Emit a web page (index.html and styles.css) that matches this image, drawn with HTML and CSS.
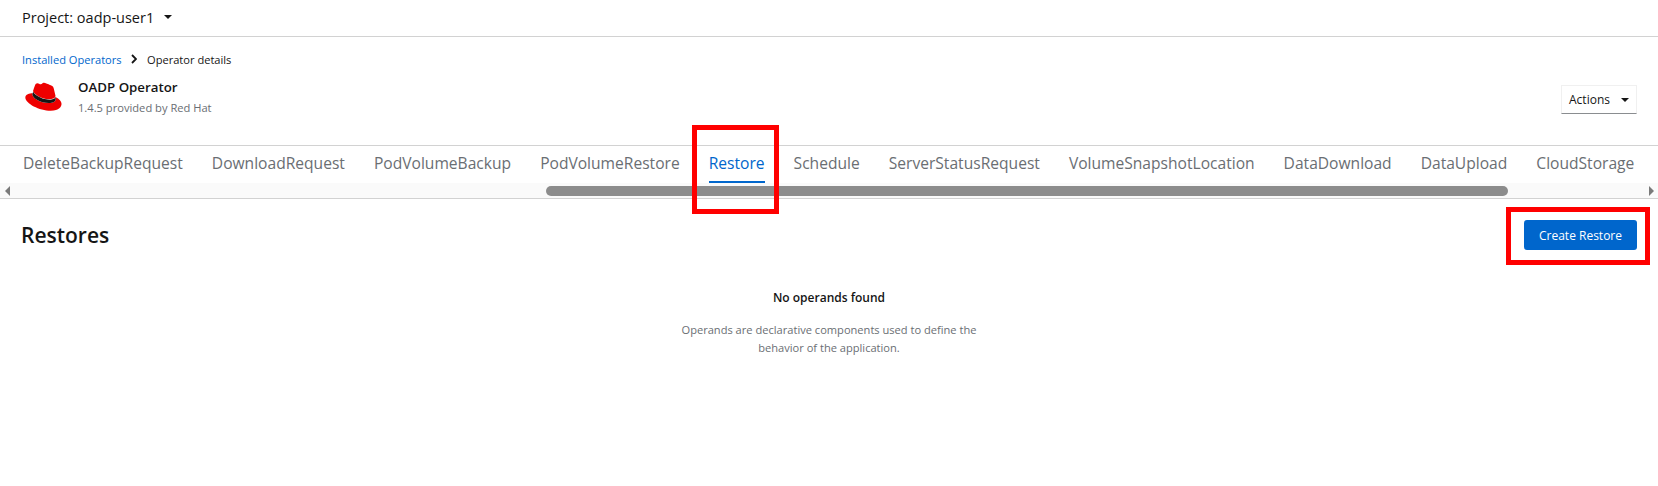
FILE: index.html
```html
<!DOCTYPE html>
<html lang="en">
<head>
<meta charset="utf-8">
<title>OADP Operator</title>
<link rel="stylesheet" href="styles.css">
</head>
<body>
<header class="project-bar">
  <span class="project-name">Project: oadp-user1</span>
  <span class="caret caret-project"></span>
</header>
<section class="details">
  <nav class="breadcrumb">
    <a class="crumb-link">Installed Operators</a>
    <svg class="crumb-sep" viewBox="0 0 6 10" width="6" height="10"><path d="M1 1l4 4-4 4" fill="none" stroke="#151515" stroke-width="1.800"/></svg>
    <span class="crumb-current">Operator details</span>
  </nav>
  <div class="title-row">
    <svg class="logo" viewBox="0 0 40 32" width="38" height="31">
      <path fill="#e00" d="M26.700 17.800c2.600 0 6.400-.5 6.400-3.600 0-.2 0-.5-.1-.7l-1.600-6.800C31 5.200 30.700 4.500 28.200 3.200 26.200 2.200 21.900.5 20.600.5c-1.200 0-1.500 1.500-2.900 1.500-1.300 0-2.300-1.100-3.600-1.100-1.200 0-2 .8-2.600 2.500 0 0-1.700 4.800-1.900 5.500v.4c0 1.900 7.500 8.500 17.100 8.500z"/>
      <path fill="#e00" d="M33.100 15.500c.3 1.600.3 1.800.3 2 0 2.800-3.100 4.300-7.200 4.300-9.300 0-17.400-5.400-17.400-9 0-.5.1-1 .3-1.400C5.800 11.600 1.400 12.200 1.400 16c0 6.300 14.900 14 26.700 14 9.100 0 11.400-4.100 11.400-7.300 0-2.500-2.200-5.400-6.400-7.200z"/>
      <path fill="#151515" d="M33.100 15.500c.3 1.600.3 1.800.3 2 0 2.800-3.100 4.300-7.200 4.300-9.300 0-17.400-5.400-17.400-9 0-.5.1-1 .3-1.400l.7-1.800v.4c0 1.900 7.500 8.300 17 8.300 2.600 0 6.300-.5 6.300-3.600 0-.2 0-.5-.1-.7z"/>
    </svg>
    <div class="title-text">
      <h1 class="op-name">OADP Operator</h1>
      <p class="op-sub">1.4.5 provided by Red Hat</p>
    </div>
    <button class="actions">Actions<span class="caret caret-actions"></span></button>
  </div>
</section>
<div class="tabs-wrap">
  <ul class="tabs">
    <li class="tab">DeleteBackupRequest</li>
    <li class="tab">DownloadRequest</li>
    <li class="tab">PodVolumeBackup</li>
    <li class="tab">PodVolumeRestore</li>
    <li class="tab tab-active">Restore</li>
    <li class="tab">Schedule</li>
    <li class="tab">ServerStatusRequest</li>
    <li class="tab">VolumeSnapshotLocation</li>
    <li class="tab">DataDownload</li>
    <li class="tab">DataUpload</li>
    <li class="tab">CloudStorage</li>
  </ul>
  <div class="scrollbar">
    <span class="arrow arrow-left"></span>
    <span class="thumb"></span>
    <span class="arrow arrow-right"></span>
  </div>
</div>
<main class="content">
  <div class="content-head">
    <h2 class="content-title">Restores</h2>
    <button class="primary">Create Restore</button>
  </div>
  <div class="empty">
    <h3 class="empty-title">No operands found</h3>
    <p class="empty-text">Operands are declarative components used to define the<br>behavior of the application.</p>
  </div>
</main>
<div class="mark mark-tab"></div>
<div class="mark mark-button"></div>
</body>
</html>
```

FILE: styles.css
```css
* { box-sizing: border-box; }
html, body { margin: 0; padding: 0; }
body {
  width: 1658px;
  height: 486px;
  overflow: hidden;
  position: relative;
  background: #fff;
  color: #151515;
  font-family: "Open Sans", "Liberation Sans", sans-serif;
}
.project-bar {
  height: 37px;
  border-bottom: 1px solid #d2d2d2;
  padding: 0 22px 2px;
  display: flex;
  align-items: center;
  font-size: 14.500px;
}
.project-name { width: 142px; white-space: nowrap; }
.caret {
  display: inline-block;
  width: 0;
  height: 0;
  border-left: 5px solid transparent;
  border-right: 5px solid transparent;
  border-top: 5px solid #151515;
}
.caret-project { border-width: 4.500px 4.500px 0; }
.details { height: 108px; padding: 13px 22px 0; }
.breadcrumb { display: flex; align-items: center; font-size: 11.100px; height: 18px; white-space: nowrap; }
.crumb-link { color: #06c; width: 100px; }
.crumb-sep { margin: 0 10px 0 9px; flex: none; }
.title-row { display: flex; align-items: flex-start; margin-top: 9px; }
.logo { margin: 5px 16px 0 2px; flex: none; }
.title-text { flex: 1; }
.op-name { margin: 0; font-size: 13.300px; line-height: 20px; font-weight: 600; }
.op-sub { margin: 1px 0 0; font-size: 11.150px; line-height: 20px; color: #6a6e73; }
.actions {
  width: 76px;
  height: 29px;
  margin: 8px -1px 0 0;
  padding: 0;
  background: #fff;
  border: 1px solid #f0f0f0;
  border-bottom-color: #8a8d90;
  font: inherit;
  font-size: 12px;
  color: #151515;
  display: flex;
  align-items: center;
  justify-content: center;
  gap: 11px;
}
.caret-actions { border-width: 4px 4px 0; }
.tabs-wrap {
  height: 54px;
  border-top: 1px solid #d2d2d2;
  border-bottom: 1px solid #d2d2d2;
  display: flex;
  flex-direction: column;
}
.tabs {
  list-style: none;
  margin: 0;
  padding: 0 0 0 23px;
  display: flex;
  gap: 29px;
  height: 37px;
  font-size: 15.600px;
  color: #6a6e73;
}
.tab { height: 37px; line-height: 18px; padding-top: 8px; white-space: nowrap; }
.tab-active { color: #06c; border-bottom: 2px solid #06c; }
.scrollbar {
  flex: 1;
  background: #fafafa;
  display: flex;
  align-items: center;
  padding-left: 5px;
}
.arrow {
  width: 0;
  height: 0;
  border-top: 5px solid transparent;
  border-bottom: 5px solid transparent;
}
.arrow-left { border-right: 5px solid #7a7a7a; margin-right: 536px; }
.arrow-right { border-left: 5px solid #7a7a7a; margin-left: 141px; }
.thumb { width: 962px; height: 10px; border-radius: 5px; background: #8c8c8c; }
.content { padding: 0 21px; }
.content-head {
  display: flex;
  justify-content: space-between;
  align-items: center;
  padding-top: 21px;
  height: 51px;
}
.content-title { margin: 0 0 1px; font-size: 21px; font-weight: 600; color: #151515; }
.primary {
  width: 113px;
  height: 30px;
  padding: 0;
  border: 0;
  border-radius: 3px;
  background: #06c;
  color: #fff;
  font: inherit;
  font-size: 12px;
}
.empty { text-align: center; padding-top: 39px; }
.empty-title { margin: 0; font-size: 12px; line-height: 18px; font-weight: 600; color: #151515; }
.empty-text { margin: 14px 0 0; font-size: 11.100px; line-height: 18px; color: #6a6e73; }
.mark { position: absolute; border: 5px solid #f00; }
.mark-tab { left: 692px; top: 125px; width: 87px; height: 89px; }
.mark-button { left: 1506px; top: 207px; width: 144px; height: 58px; }
```
